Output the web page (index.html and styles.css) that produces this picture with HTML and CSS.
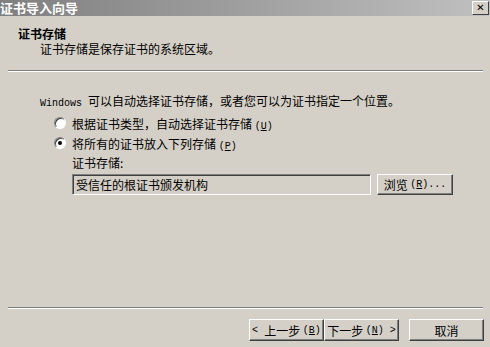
FILE: index.html
```html
<!DOCTYPE html>
<html>
<head>
<meta charset="utf-8">
<link rel="stylesheet" href="styles.css">
</head>
<body>
<div class="win">
  <div class="titlebar">
    <span class="title">证书导入向导</span>
    <span class="close">✕</span>
  </div>
  <div class="head">
    <div class="h1">证书存储</div>
    <div class="h2">证书存储是保存证书的系统区域。</div>
  </div>
  <div class="sep"></div>
  <div class="content">
    <div class="intro"><span class="mono">Windows </span>可以自动选择证书存储，或者您可以为证书指定一个位置。</div>
    <div class="radio"><span class="rb"></span><span>根据证书类型，自动选择证书存储 <span class="mono">(<u>U</u>)</span></span></div>
    <div class="radio"><span class="rb on"></span><span>将所有的证书放入下列存储 <span class="mono">(<u>P</u>)</span></span></div>
    <div class="store">
      <div class="lbl">证书存储:</div>
      <div class="row">
        <div class="field">受信任的根证书颁发机构</div>
        <div class="btn browse">浏览 <span class="mono">(<u>R</u>)...</span></div>
      </div>
    </div>
  </div>
  <div class="sep bottom"></div>
  <div class="buttons">
    <div class="btn nav"><span class="mono">&lt; </span>上一步 <span class="mono">(<u>B</u>)</span></div>
    <div class="btn nav">下一步 <span class="mono">(<u>N</u>) &gt;</span></div>
    <div class="btn cancel">取消</div>
  </div>
</div>
</body>
</html>
```
FILE: styles.css
```css
* { box-sizing: border-box; }
html, body { margin: 0; padding: 0; }
body {
  width: 490px;
  height: 347px;
  overflow: hidden;
  font-family: "Noto Sans CJK SC", "Liberation Sans", sans-serif;
  font-size: 12px;
  color: #000;
  background: #d4d0c8;
}
.win {
  width: 490px;
  height: 347px;
  background: #d4d0c8;
  display: flex;
  flex-direction: column;
}
.titlebar {
  height: 16px;
  background: linear-gradient(to right, #7f7f7f, #c0c0c0);
  display: flex;
  align-items: center;
  justify-content: space-between;
  padding-right: 1px;
}
.title {
  color: #fff;
  font-weight: bold;
  font-size: 13px;
  line-height: 16px;
  white-space: nowrap;
}
.close {
  width: 17px;
  height: 14px;
  background: #d4d0c8;
  border-right: 1px solid #404040;
  border-bottom: 1px solid #404040;
  border-top: 1px solid #fff;
  border-left: 1px solid #fff;
  font-size: 10px;
  font-weight: bold;
  line-height: 12px;
  text-align: center;
  font-family: "DejaVu Sans", sans-serif;
}
.mono {
  font-family: "Liberation Mono", monospace;
  font-size: 10px;
}
.head {
  padding: 10px 0 0 18px;
  height: 54px;
}
.h1 {
  font-weight: bold;
  line-height: 16px;
}
.h2 {
  padding-left: 22px;
  line-height: 14px;
}
.sep {
  margin: 0 7px 0 8px;
  border-top: 1px solid #808080;
  border-bottom: 1px solid #fff;
  height: 2px;
}
.content {
  padding: 21px 0 0 40px;
  height: 235px;
}
.intro {
  line-height: 16px;
  height: 20px;
}
.radio {
  display: flex;
  align-items: center;
  gap: 6px;
  padding-left: 14px;
  height: 20px;
}
.rb {
  width: 12px;
  height: 12px;
  border-radius: 50%;
  background: #fff;
  border: 1px solid;
  border-color: #808080 #fff #fff #808080;
  box-shadow: inset 1px 1px 0 #404040;
  position: relative;
  flex: none;
}
.rb.on::after {
  content: "";
  position: absolute;
  left: 3px;
  top: 3px;
  width: 4px;
  height: 4px;
  border-radius: 50%;
  background: #000;
}
.store {
  padding-left: 32px;
}
.lbl {
  height: 21px;
  line-height: 17px;
  padding-top: 1px;
}
.row {
  display: flex;
  gap: 6px;
  height: 21px;
}
.field {
  width: 299px;
  height: 21px;
  border: 1px solid;
  border-color: #808080 #fff #fff #808080;
  box-shadow: inset 1px 1px 0 #404040;
  padding: 1px 0 0 3px;
  line-height: 17px;
}
.btn {
  height: 21px;
  border: 1px solid;
  border-color: #fff #404040 #404040 #fff;
  box-shadow: inset -1px -1px 0 #808080;
  display: flex;
  align-items: center;
  justify-content: center;
  line-height: 17px;
  white-space: pre;
}
.browse { width: 76px; }
.buttons {
  display: flex;
  padding: 10px 0 0 249px;
}
.nav { width: 75px; height: 22px; }
.cancel { width: 75px; height: 22px; margin-left: 10px; }
u { text-decoration: underline; }
```
